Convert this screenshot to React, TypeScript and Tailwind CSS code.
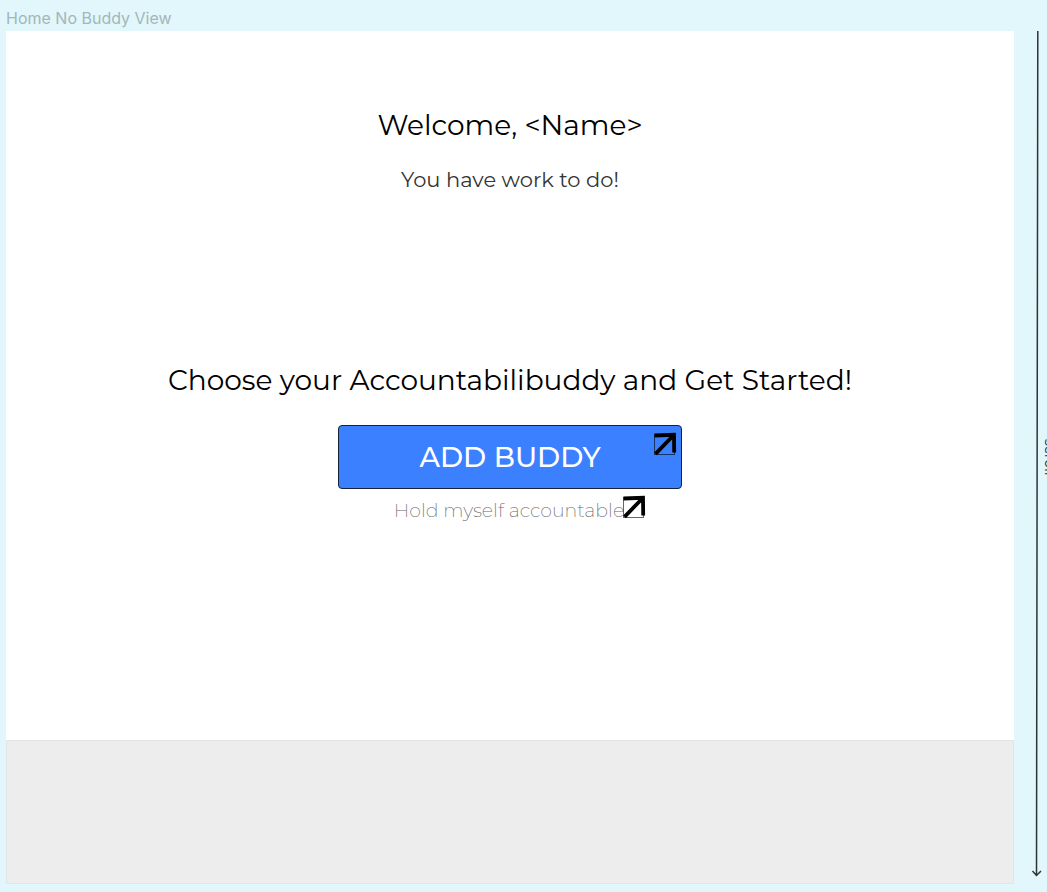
function OpenArrow({ className }: { className: string }) {
  return (
    <svg viewBox="0 0 24 24" className={className} fill="none" aria-hidden="true">
      <rect x="1.5" y="2.5" width="20" height="20" stroke="#000" strokeOpacity="0.6" strokeWidth="1" />
      <path d="M1.5 3.5L21 2.8L21.2 20.5M20.8 3L2.5 21.8" stroke="#000" strokeWidth="3.8" />
    </svg>
  );
}

export default function App() {
  return (
    <div className="flex min-h-screen overflow-hidden bg-[#e1f7fb] font-['Montserrat','Inter',sans-serif]">
      <div className="flex min-w-0 flex-1 flex-col pb-2 pl-1.5">
        <h2 className="h-[31px] pt-2 font-['Inter',sans-serif] text-[16px] leading-5 text-[#a3b6b9]">
          Home No Buddy View
        </h2>
        <main className="flex flex-1 flex-col bg-white">
          <div className="flex flex-1 flex-col items-center px-4 pt-[74px] text-center">
            <h1 className="text-[28px] leading-10 font-normal text-black">Welcome, &lt;Name&gt;</h1>
            <p className="mt-[19px] text-[21px] leading-8 font-normal text-[#333]">You have work to do!</p>
            <p className="mt-[164px] text-[28px] leading-10 font-normal text-black">
              Choose your Accountabilibuddy and Get Started!
            </p>
            <button
              type="button"
              className="relative mt-[25px] h-16 w-[344px] max-w-full rounded-[4px] border border-[#14233d] bg-[#3b80ff] text-[28px] font-medium text-white"
            >
              ADD BUDDY
              <OpenArrow className="absolute top-1.5 right-1 size-6" />
            </button>
            <a href="#self" className="mt-0.5 ml-5 flex items-center text-[19px] leading-10 font-extralight text-[#666]">
              Hold myself accountable
              <OpenArrow className="mb-2 -ml-0.5 size-6" />
            </a>
          </div>
          <footer className="h-36 border border-[#e4e4e4] bg-[#ededed]" />
        </main>
      </div>
      <aside className="relative flex w-[33px] shrink-0 flex-col items-end pt-[31px] pr-1 pb-3">
        <svg viewBox="0 0 12 846" className="h-[846px] w-3" fill="none" aria-hidden="true">
          <path d="M6.8 0L5.5 844M1.5 840L5.5 844.5L10 840" stroke="#2d3436" strokeWidth="1.5" />
        </svg>
        <span className="absolute top-[439px] left-7 text-[14px] leading-4 text-[#222] [writing-mode:vertical-rl]">
          scroll
        </span>
      </aside>
    </div>
  );
}
